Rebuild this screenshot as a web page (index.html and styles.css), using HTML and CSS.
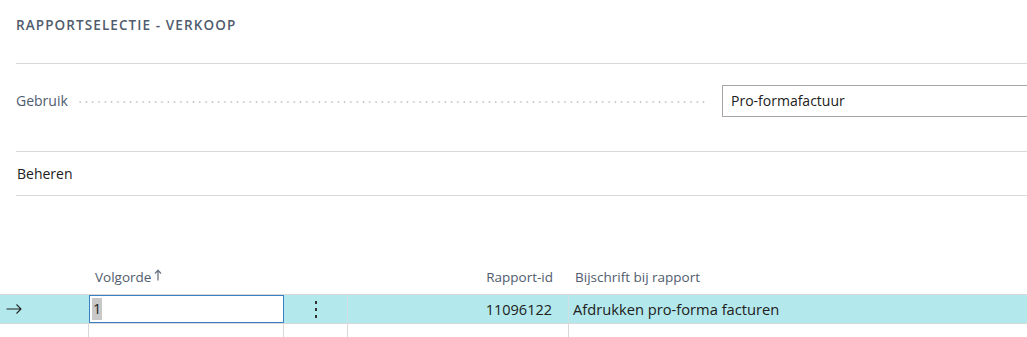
FILE: index.html
```html
<!DOCTYPE html>
<html lang="nl">
<head>
<meta charset="utf-8">
<title>Rapportselectie - Verkoop</title>
<link rel="stylesheet" href="styles.css">
</head>
<body>
<div class="page">
  <header class="title-bar">
    <h1 class="title">RAPPORTSELECTIE - VERKOOP</h1>
  </header>
  <section class="field-section">
    <div class="field">
      <span class="field-label">Gebruik</span>
      <span class="leader"></span>
      <div class="field-input">Pro-formafactuur</div>
    </div>
  </section>
  <section class="action-section">
    <span class="action">Beheren</span>
  </section>
  <div class="grid">
    <div class="grid-head">
      <div class="hc c0"></div>
      <div class="hc c1">Volgorde
        <svg class="sort" width="8" height="12" viewBox="0 0 8 12"><path d="M4 11.5V1.5M1 4.5L4 1.2L7 4.5" fill="none" stroke="#6b7585" stroke-width="1.3"/></svg>
      </div>
      <div class="hc c2"></div>
      <div class="hc c3">Rapport-id</div>
      <div class="hc c4">Bijschrift bij rapport</div>
    </div>
    <div class="grid-row selected">
      <div class="cell c0">
        <svg width="16" height="10" viewBox="0 0 16 10"><path d="M0.5 5H15M10.5 0.5L15 5L10.5 9.5" fill="none" stroke="#222" stroke-width="1.1"/></svg>
      </div>
      <div class="cell c1"><div class="cell-input"><span class="sel">1</span></div></div>
      <div class="cell c2"><span class="dots"><i></i><i></i><i></i></span></div>
      <div class="cell c3">11096122</div>
      <div class="cell c4">Afdrukken pro-forma facturen</div>
    </div>
    <div class="grid-row empty">
      <div class="cell c0 blank"></div>
      <div class="cell c1"></div>
      <div class="cell c2"></div>
      <div class="cell c3"></div>
      <div class="cell c4"></div>
    </div>
  </div>
</div>
</body>
</html>
```

FILE: styles.css
```css
html, body {
  margin: 0;
  padding: 0;
  background: #ffffff;
}
body {
  font-family: "Open Sans", "Noto Sans", sans-serif;
  font-size: 14px;
  color: #212121;
  overflow: hidden;
}
.page {
  width: 1027px;
}
.title-bar {
  margin-left: 16px;
  height: 63px;
  border-bottom: 1px solid #d8d8d8;
  display: flex;
  align-items: flex-start;
}
.title {
  margin: 15px 0 0 0;
  font-size: 13.5px;
  font-weight: 600;
  letter-spacing: 1.1px;
  color: #505c6d;
  line-height: 20px;
}
.field-section {
  margin-left: 16px;
  height: 87px;
  border-bottom: 1px solid #d8d8d8;
  display: flex;
  align-items: flex-start;
}
.field {
  display: flex;
  align-items: center;
  width: 100%;
  margin-top: 21px;
}
.field-label {
  color: #505c6d;
  line-height: 32px;
}
.leader {
  flex: 1;
  margin: 0 16px 0 9px;
  height: 2px;
  background-image: radial-gradient(circle, #c4c4c4 0.8px, transparent 1.1px);
  background-size: 6.3px 2px;
  background-repeat: repeat-x;
  position: relative;
  top: 1px;
}
.field-input {
  width: 325px;
  margin-right: -30px;
  height: 30px;
  border: 1px solid #a6a6a6;
  box-sizing: content-box;
  padding-left: 8px;
  line-height: 30px;
  color: #212121;
}
.action-section {
  margin-left: 16px;
  height: 43px;
  border-bottom: 1px solid #d8d8d8;
  display: flex;
  align-items: center;
}
.action {
  padding-left: 1px;
  color: #212121;
}
.grid {
  margin-top: 64px;
}
.grid-head, .grid-row {
  display: grid;
  grid-template-columns: 89px 195px 64px 221px 1fr;
}
.grid-head {
  height: 34px;
  border-bottom: 1px solid #d8d8d8;
}
.hc {
  color: #505c6d;
  font-size: 13.5px;
  display: flex;
  align-items: center;
  padding-bottom: 1px;
}
.hc.c1 {
  padding-left: 6px;
  gap: 3px;
}
.sort {
  position: relative;
  top: -2px;
}
.hc.c3 {
  justify-content: flex-end;
  padding-right: 16px;
}
.hc.c4 {
  padding-left: 6px;
}
.grid-row.selected {
  height: 28px;
  background: #b3e9ec;
  border-bottom: 1px solid #d8d8d8;
}
.cell {
  display: flex;
  align-items: center;
}
.selected .c0 {
  padding-left: 6px;
}
.selected .c1 {
  align-items: stretch;
}
.cell-input {
  flex: 1;
  background: #fff;
  border: 1px solid #3a7fc4;
  display: flex;
  align-items: center;
  padding-left: 2px;
  font-size: 14.5px;
}
.sel {
  background: #c8c8c8;
  padding: 1px 1px;
  line-height: 20px;
}
.selected .c2 {
  justify-content: center;
  border-right: 1px solid #cfdfe2;
  margin-left: 1px;
}
.dots {
  display: flex;
  flex-direction: column;
  gap: 4px;
  margin-left: -1px;
}
.dots i {
  width: 2px;
  height: 3px;
  background: #333;
  display: block;
}
.selected .c3 {
  justify-content: flex-end;
  padding-right: 16px;
  border-right: 1px solid #cfdfe2;
  font-size: 14.5px;
}
.selected .c4 {
  padding-left: 4px;
  font-size: 14.7px;
}
.grid-row.empty {
  height: 14px;
}
.empty .c1, .empty .c2, .empty .c3, .empty .c4 {
  border-left: 1px solid #d8d8d8;
  margin-left: -1px;
}
```
